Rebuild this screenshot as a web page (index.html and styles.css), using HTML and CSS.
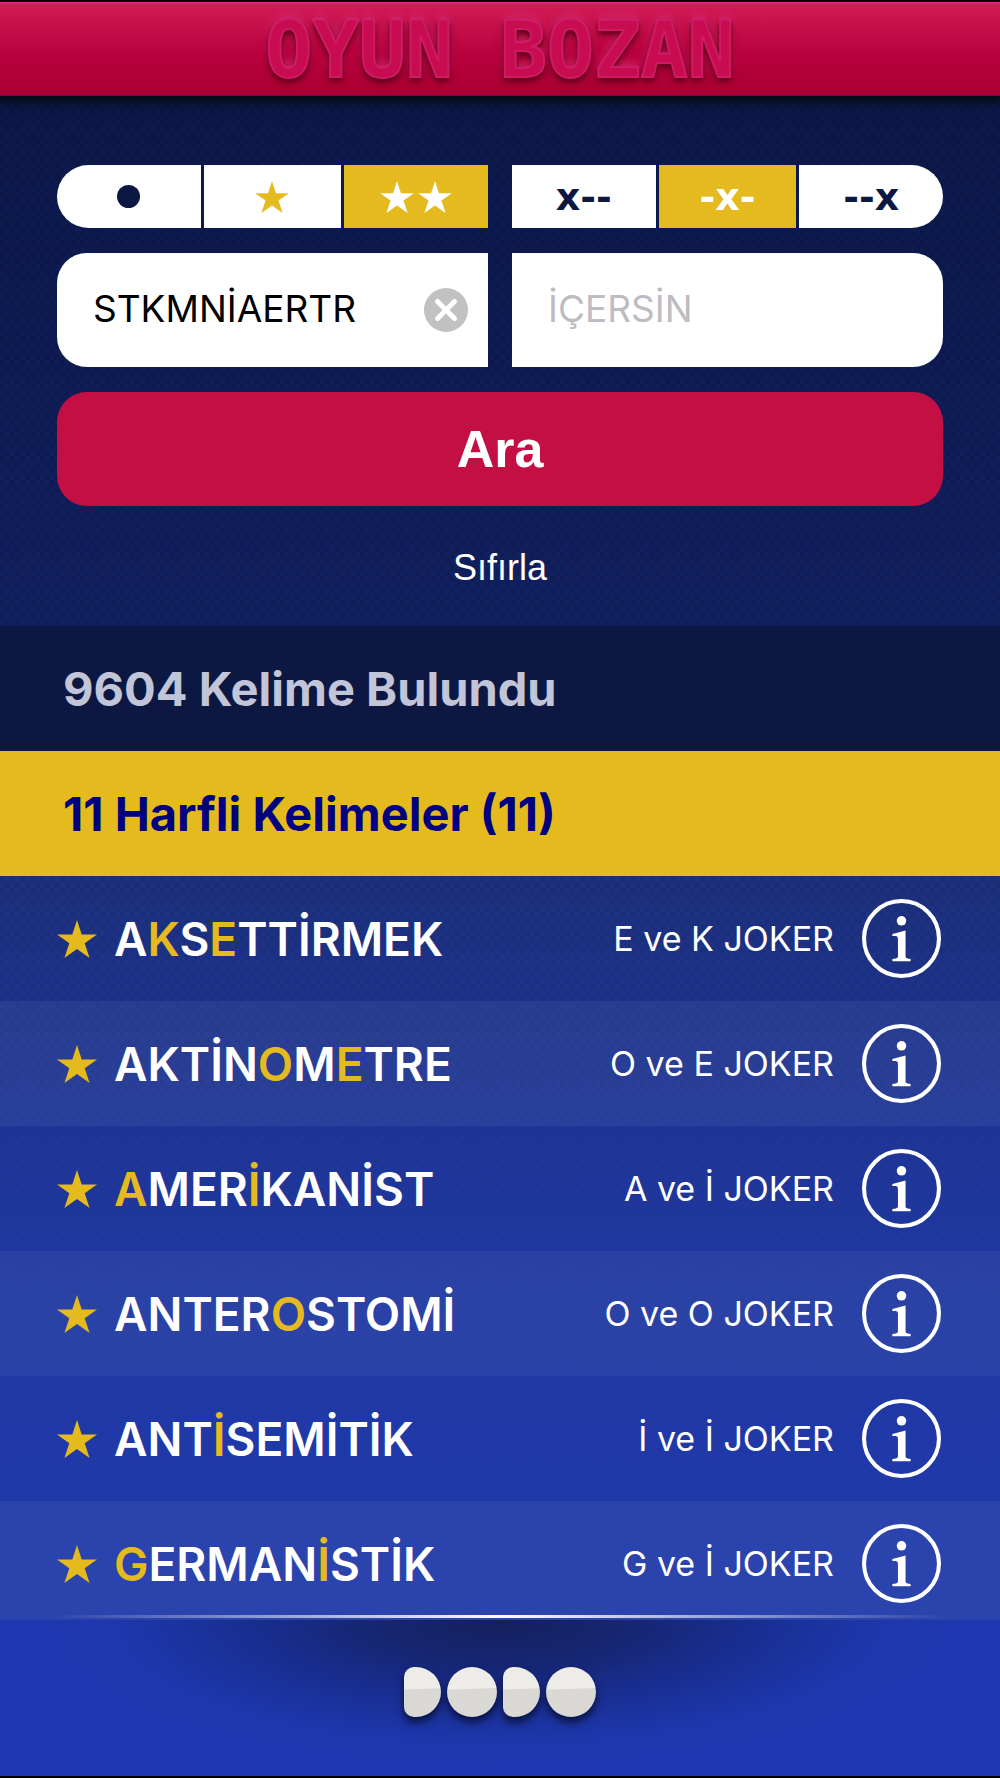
FILE: index.html
```html
<!DOCTYPE html>
<html lang="tr">
<head>
<meta charset="utf-8">
<meta name="viewport" content="width=device-width, initial-scale=1">
<title>Oyun Bozan</title>
<link rel="stylesheet" href="styles.css">
</head>
<body>
<svg class="defs" aria-hidden="true">
  <symbol id="star" viewBox="0 0 40 38">
    <path d="M20 0 24.7 14.4H40L27.7 23.3 32.6 38 20 29 7.4 38 12.3 23.3 0 14.4H15.3Z"/>
  </symbol>
  <symbol id="info" viewBox="0 0 78 78">
    <circle cx="39" cy="39" r="37" fill="none" stroke="currentColor" stroke-width="4"/>
    <circle cx="39" cy="21.500" r="4.700" fill="currentColor"/>
    <path fill="currentColor" d="M30 34.500 43 31V56.500Q43 58.500 45 58.800L48 59.300V61.500H30V59.300L33.500 58.800Q35.500 58.500 35.500 56.500V39Q35.500 36.800 33.500 36.600L30 36.500Z"/>
  </symbol>
</svg>
<div class="app">
  <header class="topbar"><h1 class="title">OYUN BOZAN</h1></header>

  <form class="search">
    <div class="pair">
      <fieldset class="segments segments-left" aria-label="Joker">
        <label class="segment"><input type="radio" name="joker" value="0" aria-label="Jokersiz"><span class="dot"></span></label>
        <label class="segment"><input type="radio" name="joker" value="1" aria-label="Bir joker"><svg class="star"><use href="#star"/></svg></label>
        <label class="segment"><input type="radio" name="joker" value="2" aria-label="İki joker" checked><svg class="star"><use href="#star"/></svg><svg class="star"><use href="#star"/></svg></label>
      </fieldset>
      <fieldset class="segments segments-right" aria-label="Konum">
        <label class="segment"><input type="radio" name="place" value="start">x--</label>
        <label class="segment"><input type="radio" name="place" value="middle" checked>-x-</label>
        <label class="segment"><input type="radio" name="place" value="end">--x</label>
      </fieldset>
    </div>
    <div class="pair">
      <div class="field field-left">
        <input class="field-input" type="text" value="STKMNİAERTR" aria-label="Harfler">
        <button class="clear" type="button" aria-label="Temizle">
          <svg viewBox="0 0 44 44"><circle cx="22" cy="22" r="22" fill="#c1c1c1"/><path d="M13.500 13.500 30.500 30.500M30.500 13.500 13.500 30.500" stroke="#fff" stroke-width="5" stroke-linecap="round"/></svg>
        </button>
      </div>
      <div class="field field-right">
        <input class="field-input" type="text" placeholder="İÇERSİN" aria-label="İçersin">
      </div>
    </div>
    <button class="submit" type="submit">Ara</button>
    <button class="reset" type="reset">Sıfırla</button>
  </form>

  <main class="results">
    <h2 class="band band-count">9604 Kelime Bulundu</h2>
    <h3 class="band band-group">11 Harfli Kelimeler (11)</h3>
    <ul class="words">
      <li class="word"><svg class="star"><use href="#star"/></svg><span class="name">A<b>K</b>S<b>E</b>TTİRMEK</span><span class="joker">E ve K JOKER</span><button class="info" type="button" aria-label="Bilgi"><svg><use href="#info"/></svg></button></li>
      <li class="word"><svg class="star"><use href="#star"/></svg><span class="name">AKTİN<b>O</b>M<b>E</b>TRE</span><span class="joker">O ve E JOKER</span><button class="info" type="button" aria-label="Bilgi"><svg><use href="#info"/></svg></button></li>
      <li class="word"><svg class="star"><use href="#star"/></svg><span class="name"><b>A</b>MER<b>İ</b>KANİST</span><span class="joker">A ve İ JOKER</span><button class="info" type="button" aria-label="Bilgi"><svg><use href="#info"/></svg></button></li>
      <li class="word"><svg class="star"><use href="#star"/></svg><span class="name">ANTER<b>O</b>STOMİ</span><span class="joker">O ve O JOKER</span><button class="info" type="button" aria-label="Bilgi"><svg><use href="#info"/></svg></button></li>
      <li class="word"><svg class="star"><use href="#star"/></svg><span class="name">ANT<b>İ</b>SEMİTİK</span><span class="joker">İ ve İ JOKER</span><button class="info" type="button" aria-label="Bilgi"><svg><use href="#info"/></svg></button></li>
      <li class="word"><svg class="star"><use href="#star"/></svg><span class="name"><b>G</b>ERMAN<b>İ</b>STİK</span><span class="joker">G ve İ JOKER</span><button class="info" type="button" aria-label="Bilgi"><svg><use href="#info"/></svg></button></li>
    </ul>
  </main>

  <footer class="footer">
    <div class="brand" role="img" aria-label="DODO">
      <span class="half"></span><span class="disc"></span><span class="half"></span><span class="disc"></span>
    </div>
  </footer>
</div>
</body>
</html>
```

FILE: styles.css
```css
* { box-sizing: border-box; }

:root {
  --navy: #0d1842;
  --yellow: #e4ba1f;
  --sans: Inter, "Noto Sans", sans-serif;
  --helvetica: "Liberation Sans", Arial, sans-serif;
}

body { margin: 0; font-family: var(--sans); background: #1d38b0; }
button, input { font: inherit; }
button { border: 0; padding: 0; background: none; color: inherit; cursor: pointer; }
.defs { display: none; }

.app {
  display: flex;
  flex-direction: column;
  height: 100vh;
  border-top: 2px solid #000;
  border-bottom: 2px solid #000;
  color: #fff;
}

/* Title bar */
.topbar {
  position: relative;
  flex: none;
  height: 94px;
  display: flex;
  align-items: center;
  justify-content: center;
  background: linear-gradient(#d01c55, #b9003f 55%, #a90033);
  border-top: 2px solid #e8207a;
  border-bottom: 1px solid #85004a;
  box-shadow: 0 4px 8px 3px #070b18;
}
.title {
  margin: 0;
  font: bold 78px/92px "DejaVu Sans Mono", monospace;
  color: #c80c50;
  -webkit-text-stroke: 2px #d01a66;
  text-shadow: 0 -1px 1px #f040a8, 0 3px 5px #60001a, 0 4px 8px #70001c, 0 -4px 8px #d92a70;
}

/* Search form */
.search {
  flex: none;
  display: flex;
  flex-direction: column;
  gap: 25px;
  padding: 69px 57px 21px;
  background:
    repeating-conic-gradient(#1428780f 0 25%, #0000000f 0 50%) 0 0 / 10px 12px,
    linear-gradient(#0c1747, #11205f);
}
.pair { display: grid; grid-template-columns: repeat(2, minmax(0, 1fr)); gap: 24px; }
.segments {
  margin: 0;
  padding: 0;
  border: 0;
  min-width: 0;
  display: grid;
  grid-template-columns: 26fr 25fr 26fr;
  gap: 3px;
  overflow: hidden;
}
.segments-left { border-radius: 32px 0 0 32px; }
.segments-right { border-radius: 0 32px 32px 0; }
.segment {
  height: 63px;
  display: flex;
  align-items: center;
  justify-content: center;
  background: #fff;
  color: var(--navy);
  font: bold 38px/60px "DejaVu Sans", sans-serif;
  cursor: pointer;
}
.segment input { appearance: none; width: 0; height: 0; margin: 0; }
.segment:has(:checked) { background: var(--yellow); color: #fff; }
.segment .star { width: 34px; height: 32px; margin: 0 2px; }
.segment:has(:checked) .star { fill: #fff; }
.dot { width: 23px; height: 23px; border-radius: 50%; background: var(--navy); }
.star { flex: none; width: 40px; height: 38px; fill: var(--yellow); }

.field {
  height: 114px;
  display: flex;
  align-items: center;
  padding: 0 20px 0 36px;
  background: #fff;
}
.field-left { border-radius: 30px 0 0 30px; }
.field-right { border-radius: 0 30px 30px 0; }
.field-input {
  flex: 1;
  min-width: 0;
  height: 110px;
  padding: 0 0 4px;
  border: 0;
  outline: 0;
  background: none;
  color: #000;
  font-size: 37px;
}
.field-input::placeholder { color: #bcbcc2; opacity: 1; }
.clear { flex: none; width: 44px; height: 44px; }
.clear svg, .info svg { display: block; width: 100%; height: 100%; }

.submit {
  height: 114px;
  border-radius: 30px;
  background: #c30f43;
  font: bold 52px/110px var(--helvetica);
}
.reset { align-self: center; height: 74px; font: 36px/74px var(--helvetica); }

/* Results */
.results { flex: 1 1 0; min-height: 0; overflow-y: auto; scrollbar-width: none; }
.band {
  margin: 0;
  padding: 0 63px;
  font-size: 47px;
  font-weight: 700;
  line-height: 125px;
}
.band-count { background: var(--navy); color: #c1c5d7; }
.band-group { background: var(--yellow); color: #000080; }
.words {
  margin: 0;
  padding: 0;
  list-style: none;
  background:
    linear-gradient(#1e389c00, #2039a8 80%),
    repeating-conic-gradient(#1e46960c 0 25%, #0000000c 0 50%) 0 0 / 10px 12px,
    linear-gradient(#1c2f7b, #2039a8);
}
.word {
  height: 125px;
  display: flex;
  align-items: center;
  padding: 0 59px 0 57px;
}
.word:nth-child(even) { background: #ffffff0d; }
.name { margin-left: 17px; font-size: 46px; font-weight: 600; }
.name b { font-weight: inherit; color: var(--yellow); }
.joker { margin-left: auto; font-size: 34px; font-weight: 400; }
.info { flex: none; width: 79px; height: 79px; margin-left: 28px; }

/* Footer */
.footer {
  position: relative;
  flex: none;
  height: 156px;
  display: flex;
  justify-content: center;
  padding-top: 47px;
  background:
    radial-gradient(ellipse 45% 145px at 50% 0, #14205c, #15246ce6 30%, #18298499 60%, #1c339e33 85%, #1d38b000),
    #1d38b0;
}
.footer::before {
  content: "";
  position: absolute;
  left: 5%;
  right: 5%;
  top: -5px;
  height: 3px;
  background: linear-gradient(90deg, #fff0, #fff 50%, #fff0);
}
.brand { display: flex; gap: 6px; height: 50px; filter: drop-shadow(0 5px 4px #08103a); }
.disc, .half {
  height: 50px;
  background: linear-gradient(178deg, #edece9 43%, #d9d8d5 45%);
}
.disc { width: 50px; border-radius: 50%; }
.half { width: 37px; border-radius: 10px 25px 25px 10px; }
```
